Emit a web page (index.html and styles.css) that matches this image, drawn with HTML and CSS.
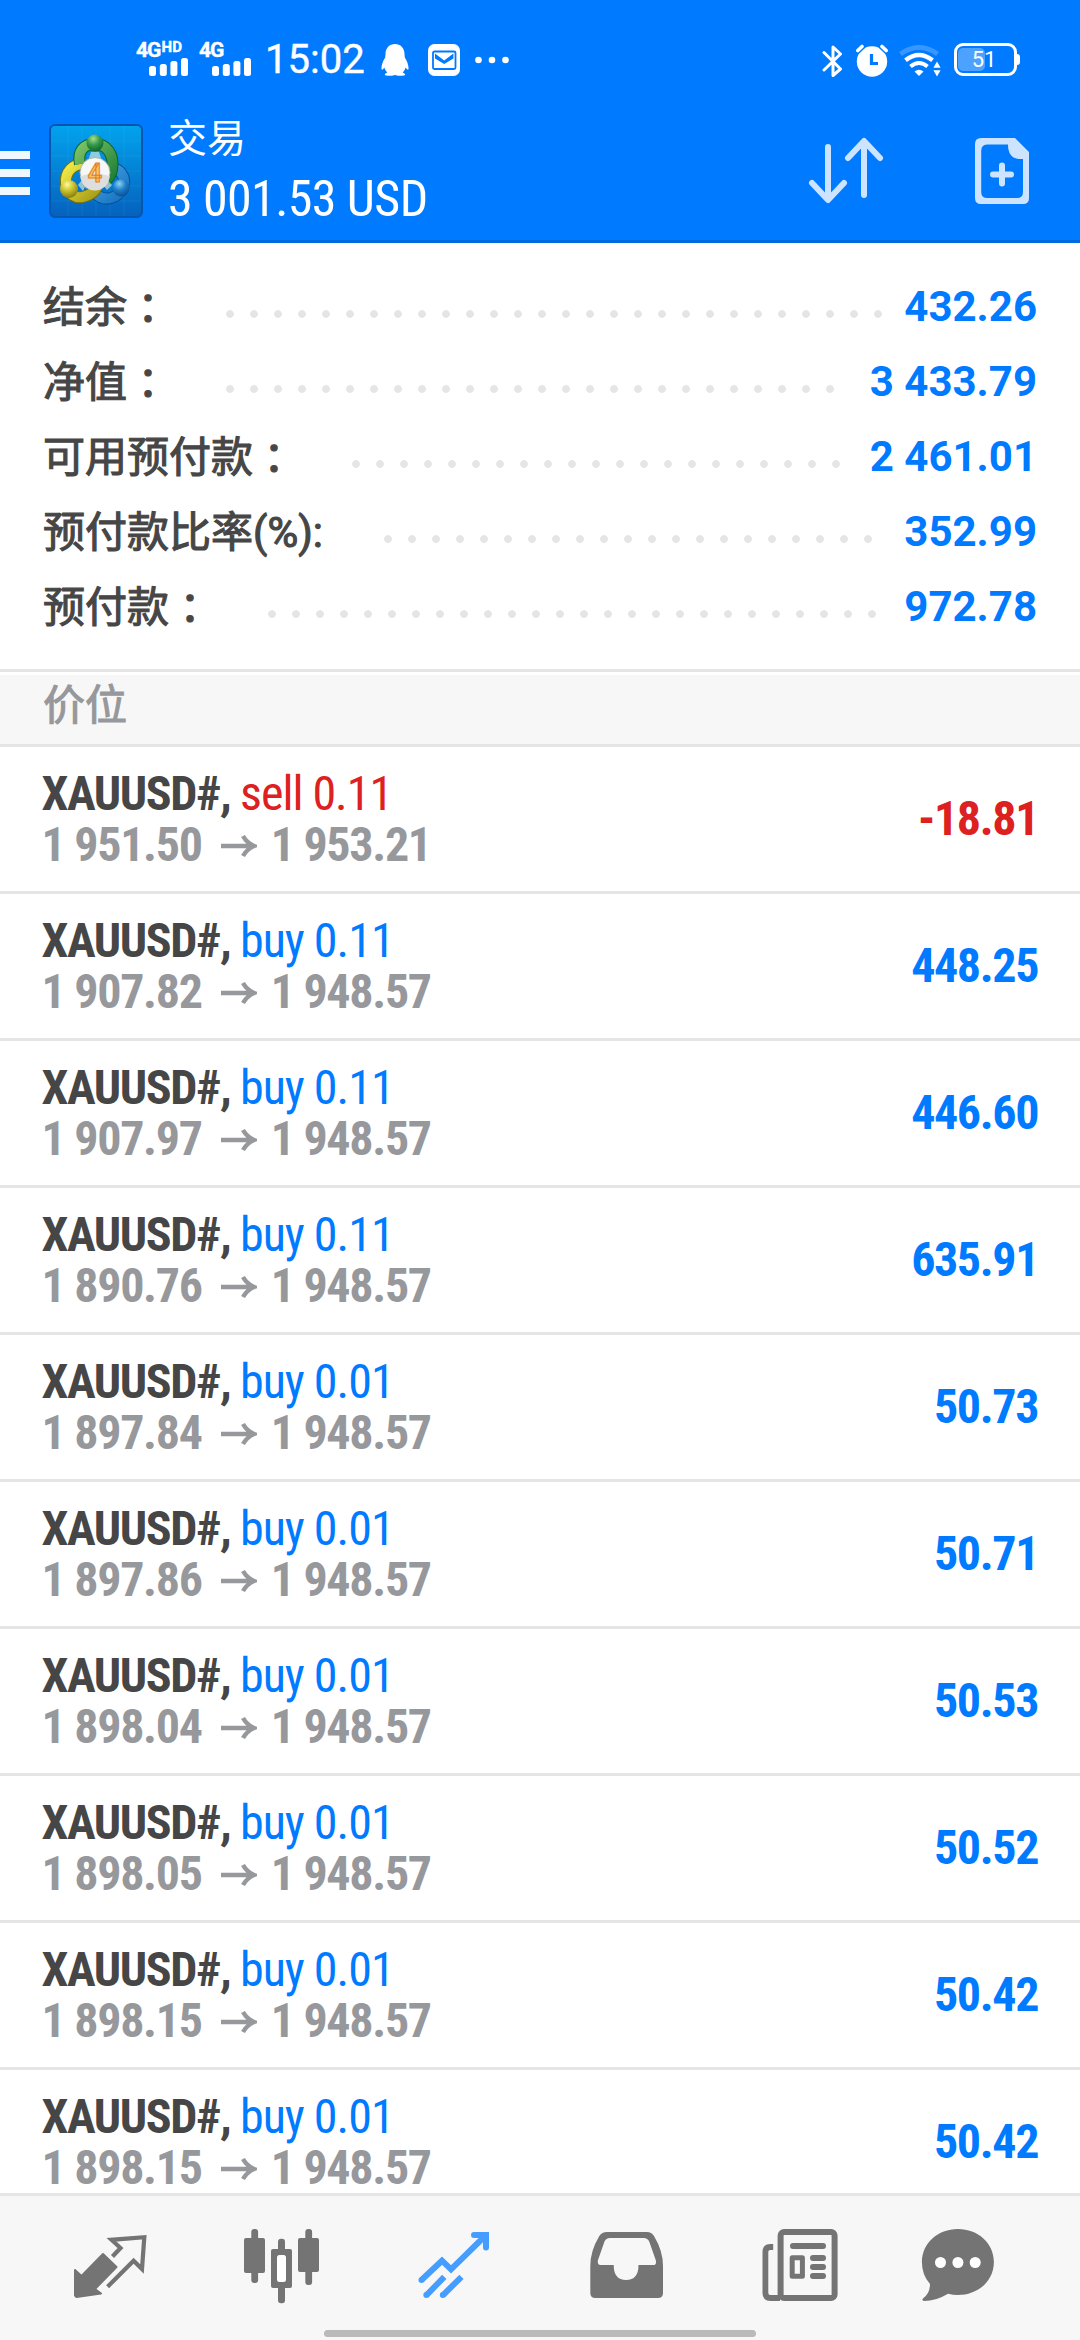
FILE: index.html
```html
<!DOCTYPE html>
<html lang="zh-CN">
<head>
<meta charset="utf-8">
<title>交易</title>
<link rel="stylesheet" href="styles.css">
</head>
<body>
<div class="app">
  <header class="top">
    <div class="status">
      <div class="sim sim-hd">
        <span class="net">4G<sup>HD</sup></span>
        <svg class="bars" width="40" height="18" viewBox="0 0 40 18"><g fill="#fff"><rect y="8" width="7" height="10" rx="2.5"/><rect x="10.8" y="6" width="7" height="12" rx="2.5"/><rect x="21.4" y="3" width="7" height="15" rx="2.5"/><rect x="32" width="7" height="18" rx="2.5"/></g></svg>
      </div>
      <div class="sim">
        <span class="net">4G</span>
        <svg class="bars" width="40" height="18" viewBox="0 0 40 18"><g fill="#fff"><rect y="8" width="7" height="10" rx="2.5"/><rect x="10.8" y="6" width="7" height="12" rx="2.5"/><rect x="21.4" y="3" width="7" height="15" rx="2.5"/><rect x="32" width="7" height="18" rx="2.5"/></g></svg>
      </div>
      <span class="clock">15:02</span>
      <svg class="penguin" width="28" height="32" viewBox="0 0 28 32"><path fill="#fff" d="M14 0C8.500 0 4.500 4 4.500 10l-.3 3.500C2 17 .3 21 .5 25c.2 1.500 1.600.5 2.900-1.500.5 2 1.600 3.700 3 4.900-1.600.7-2.600 1.500-2.600 2.400 0 1.200 9 1.500 10.200 0 1.200 1.500 10.200 1.200 10.200 0 0-.9-1-1.700-2.600-2.400 1.400-1.200 2.500-2.900 3-4.900 1.300 2 2.700 3 2.900 1.500.2-4-1.500-8-3.700-11.500L23.500 10C23.500 4 19.500 0 14 0z"/></svg>
      <svg class="mail" width="32" height="32" viewBox="0 0 32 32"><rect width="32" height="32" rx="6.500" fill="#fff"/><rect x="5" y="7.500" width="22.500" height="17.500" rx="1.500" fill="none" stroke="#007aff" stroke-width="1.800"/><path d="M7 9.500l9.200 7 9.200-7v5l-9.200 5.500-9.200-5.500z" fill="#007aff"/></svg>
      <svg class="more" width="34" height="8" viewBox="0 0 34 8"><g fill="#fff"><circle cx="3.500" cy="4" r="3.300"/><circle cx="17" cy="4" r="3.300"/><circle cx="30.500" cy="4" r="3.300"/></g></svg>
      <svg class="bt" width="22" height="34" viewBox="0 0 22 34"><path fill="none" stroke="#fff" stroke-width="3" stroke-linejoin="round" stroke-linecap="round" d="M2 8.500 18.500 25 11 31.500V3l7.500 7L2 26"/></svg>
      <svg class="alarm" width="32" height="33" viewBox="0 0 32 33"><circle cx="16" cy="17.500" r="15.200" fill="#fff"/><path d="M1.800 6.500 6 2.500M30.200 6.500 26 2.500" stroke="#007aff" stroke-width="6.500" stroke-linecap="round"/><path d="M1.800 6.500 6 2.500M30.200 6.500 26 2.500" stroke="#fff" stroke-width="3.600" stroke-linecap="round"/><path d="M15.500 10v9.500h6.500" fill="none" stroke="#007aff" stroke-width="3.200"/></svg>
      <svg class="wifi" width="42" height="32" viewBox="0 0 42 32"><g fill="none" stroke="#fff"><path d="M1.500 9Q20 -4 38.500 9" stroke-width="5" opacity=".22"/><path d="M6.500 15.200Q20 4.800 33.500 15.200" stroke-width="4.400"/><path d="M11.500 21.500Q20 14.600 28.500 21.500" stroke-width="4"/></g><path d="M15.500 26.500Q20 23 24.500 26.500L20 31z" fill="#fff"/><path d="M38 16.500l3.600 6.200h-7.200zM38 31.500l3.600-6.200h-7.200z" fill="#fff"/></svg>
      <div class="battery"><span class="charge"></span><span class="pct">51</span></div>
    </div>
    <div class="bar">
      <svg class="menu" width="30" height="44" viewBox="0 0 30 44"><path d="M0 0h30v8H0zM0 18h30v8H0zM0 36h30v8H0z" fill="#eff8ff"/></svg>
      <svg class="logo" width="94" height="94" viewBox="0 0 94 94">
        <defs>
          <linearGradient id="sky" x1="0" y1="0" x2="0" y2="1"><stop offset="0" stop-color="#02a3ee"/><stop offset="1" stop-color="#0561bd"/></linearGradient>
          <linearGradient id="green" x1="0" y1="0" x2="1" y2="1"><stop offset="0" stop-color="#7cc268"/><stop offset="1" stop-color="#1d7f35"/></linearGradient>
          <linearGradient id="yellow" x1="0" y1="0" x2="1" y2="1"><stop offset="0" stop-color="#f4ec48"/><stop offset="1" stop-color="#a79b16"/></linearGradient>
          <linearGradient id="blue" x1="0" y1="0" x2="1" y2="1"><stop offset="0" stop-color="#4fa9e4"/><stop offset="1" stop-color="#1673c2"/></linearGradient>
          <radialGradient id="gball" cx=".4" cy=".25" r=".75"><stop offset="0" stop-color="#a7df8e"/><stop offset=".5" stop-color="#35994a"/><stop offset="1" stop-color="#10682b"/></radialGradient>
          <radialGradient id="yball" cx=".4" cy=".25" r=".75"><stop offset="0" stop-color="#fffb9a"/><stop offset=".5" stop-color="#c9bf2a"/><stop offset="1" stop-color="#857e13"/></radialGradient>
          <radialGradient id="bball" cx=".4" cy=".25" r=".75"><stop offset="0" stop-color="#8fd0f5"/><stop offset=".5" stop-color="#1f80c8"/><stop offset="1" stop-color="#0b5196"/></radialGradient>
        </defs>
        <rect x="1" y="1" width="92" height="92" rx="5" fill="url(#sky)" stroke="#0756ae" stroke-width="2"/>
        <path d="M19 2v90M33 2v90M47 2v90M61 2v90M75 2v90M2 17h90M2 32h90M2 47h90M2 62h90M2 77h90" stroke="#fff" stroke-opacity=".06"/>
        <path fill="none" stroke="#07519a" stroke-width="12" d="M62 43c12 3 16 13 11 22s-16 13-25 6c-5-4-8-9-9-14"/>
        <path fill="none" stroke="url(#blue)" stroke-width="10" d="M62 43c12 3 16 13 11 22s-16 13-25 6c-5-4-8-9-9-14"/>
        <path fill="none" stroke="#756e0c" stroke-width="12" d="M36 40c-13-1-20 9-19 19 1 11 10 17 20 13 6-2 9-5 11-9"/>
        <path fill="none" stroke="url(#yellow)" stroke-width="10" d="M36 40c-13-1-20 9-19 19 1 11 10 17 20 13 6-2 9-5 11-9"/>
        <path fill="none" stroke="#0b6428" stroke-width="12" d="M31 40C28 27 35 20 46 20s20 10 17 26c-1 5-3 8-6 10"/>
        <path fill="none" stroke="url(#green)" stroke-width="10" d="M31 40C28 27 35 20 46 20s20 10 17 26c-1 5-3 8-6 10"/>
        <path d="M42 28h8l2 6H40zM29 61l3-4 5 4-3 6zM63 61l-4-4-5 4 4 5z" fill="#e9f5dd" opacity=".6"/>
        <circle cx="46" cy="19" r="8.500" fill="url(#gball)"/>
        <circle cx="20" cy="65" r="9" fill="url(#yball)"/>
        <circle cx="72" cy="64" r="8.500" fill="url(#bball)"/>
        <circle cx="46" cy="48.500" r="15" fill="#f7f7f7" stroke="#a5b4aa"/>
        <path d="M31.500 52Q46 47 60.500 52a14.500 14.500 0 0 1-29 0z" fill="#dedede"/>
        <text class="logo-num" x="46" y="57.500" text-anchor="middle">4</text>
      </svg>
      <div class="titles">
        <h1>交易</h1>
        <div class="total">3 001.53 USD</div>
      </div>
      <svg class="sort" width="76" height="68" viewBox="0 0 76 68"><path fill="none" stroke="#cce4ff" stroke-width="6" stroke-linecap="round" stroke-linejoin="round" d="M20 10v52M4 46l16 17 16-17M56 58V6M40 21 56 4l16 17"/></svg>
      <svg class="new" width="54" height="66" viewBox="0 0 54 66"><path fill="#cce4ff" fill-rule="evenodd" d="M5 0h35l14 14v46q0 6-6 6H6q-6 0-6-6V6q0-6 6-6zM12 6.500Q6.200 6.500 6.200 13v41q0 6 6 6H42q6 0 6-6V21h-4q-11-1-11-14.500z"/><path d="M27 27.500v18M18 36.500h18" stroke="#cce4ff" stroke-width="6" stroke-linecap="round"/></svg>
    </div>
  </header>

  <section class="summary">
    <div class="line"><span class="label">结余<i lang="ja">：</i></span><span class="dots" style="width:656px"></span><b>432.26</b></div>
    <div class="line"><span class="label">净值<i lang="ja">：</i></span><span class="dots" style="width:608px"></span><b>3 433.79</b></div>
    <div class="line"><span class="label">可用预付款<i lang="ja">：</i></span><span class="dots" style="width:488px"></span><b>2 461.01</b></div>
    <div class="line ratio"><span class="label">预付款比率(%):</span><span class="dots" style="width:488px"></span><b>352.99</b></div>
    <div class="line"><span class="label">预付款<i lang="ja">：</i></span><span class="dots" style="width:608px"></span><b>972.78</b></div>
  </section>

  <h2 class="section">价位</h2>

  <main class="positions">
    <div class="pos sell"><div><p class="name">XAUUSD#, <span>sell 0.11</span></p><p class="price">1 951.50<svg class="arrow" width="36" height="24" viewBox="0 0 36 24"><path d="M0 12h32M22 2q4 7 11 10-7 3-11 10" /></svg>1 953.21</p></div><b>-18.81</b></div>
    <div class="pos"><div><p class="name">XAUUSD#, <span>buy 0.11</span></p><p class="price">1 907.82<svg class="arrow" width="36" height="24" viewBox="0 0 36 24"><path d="M0 12h32M22 2q4 7 11 10-7 3-11 10" /></svg>1 948.57</p></div><b>448.25</b></div>
    <div class="pos"><div><p class="name">XAUUSD#, <span>buy 0.11</span></p><p class="price">1 907.97<svg class="arrow" width="36" height="24" viewBox="0 0 36 24"><path d="M0 12h32M22 2q4 7 11 10-7 3-11 10" /></svg>1 948.57</p></div><b>446.60</b></div>
    <div class="pos"><div><p class="name">XAUUSD#, <span>buy 0.11</span></p><p class="price">1 890.76<svg class="arrow" width="36" height="24" viewBox="0 0 36 24"><path d="M0 12h32M22 2q4 7 11 10-7 3-11 10" /></svg>1 948.57</p></div><b>635.91</b></div>
    <div class="pos"><div><p class="name">XAUUSD#, <span>buy 0.01</span></p><p class="price">1 897.84<svg class="arrow" width="36" height="24" viewBox="0 0 36 24"><path d="M0 12h32M22 2q4 7 11 10-7 3-11 10" /></svg>1 948.57</p></div><b>50.73</b></div>
    <div class="pos"><div><p class="name">XAUUSD#, <span>buy 0.01</span></p><p class="price">1 897.86<svg class="arrow" width="36" height="24" viewBox="0 0 36 24"><path d="M0 12h32M22 2q4 7 11 10-7 3-11 10" /></svg>1 948.57</p></div><b>50.71</b></div>
    <div class="pos"><div><p class="name">XAUUSD#, <span>buy 0.01</span></p><p class="price">1 898.04<svg class="arrow" width="36" height="24" viewBox="0 0 36 24"><path d="M0 12h32M22 2q4 7 11 10-7 3-11 10" /></svg>1 948.57</p></div><b>50.53</b></div>
    <div class="pos"><div><p class="name">XAUUSD#, <span>buy 0.01</span></p><p class="price">1 898.05<svg class="arrow" width="36" height="24" viewBox="0 0 36 24"><path d="M0 12h32M22 2q4 7 11 10-7 3-11 10" /></svg>1 948.57</p></div><b>50.52</b></div>
    <div class="pos"><div><p class="name">XAUUSD#, <span>buy 0.01</span></p><p class="price">1 898.15<svg class="arrow" width="36" height="24" viewBox="0 0 36 24"><path d="M0 12h32M22 2q4 7 11 10-7 3-11 10" /></svg>1 948.57</p></div><b>50.42</b></div>
    <div class="pos"><div><p class="name">XAUUSD#, <span>buy 0.01</span></p><p class="price">1 898.15<svg class="arrow" width="36" height="24" viewBox="0 0 36 24"><path d="M0 12h32M22 2q4 7 11 10-7 3-11 10" /></svg>1 948.57</p></div><b>50.42</b></div>
  </main>

  <footer class="tabs">
    <nav>
      <svg viewBox="0 0 173 96"><path fill="#747474" stroke="#747474" stroke-width="2" stroke-linejoin="round" d="M81 34l13.500 13L73 69l6 4.500L54.500 77l-1.500-1.500V50l6.500 6z"/><path fill="none" stroke="#747474" stroke-width="4.200" d="M90.500 36.500 98.500 28l-9-8.200 32.800-2.600L120 49l-8.400-8.300-26 26"/></svg>
      <svg viewBox="0 0 173 96"><g fill="#747474"><rect x="49" y="18" width="21" height="35" rx="2"/><rect x="56.300" y="9" width="6.800" height="54" rx="3"/><rect x="83" y="18.700" width="7" height="64.500" rx="3"/><rect x="76" y="29" width="21" height="39" rx="2"/><rect x="103" y="18" width="21" height="34" rx="2"/><rect x="110.300" y="9" width="6.800" height="56" rx="3"/></g><rect x="82" y="35" width="9" height="27" rx="2.500" fill="#fff"/></svg>
      <svg viewBox="0 0 173 96"><g fill="none" stroke="#459dff" stroke-width="6"><path d="M54 59.500 74 40.700l9 8.600L117 16"/><path d="M106 15h12v12.500" stroke-linecap="round"/><path d="M58.300 75.300l18-18.500M74.800 75.300l18.700-18.500"/></g><g fill="#459dff"><circle cx="53.500" cy="60" r="3"/><circle cx="58.300" cy="75" r="3"/><circle cx="74.800" cy="75" r="3"/></g></svg>
      <svg viewBox="0 0 173 96"><path fill="#747474" fill-rule="evenodd" d="M66 12h40q4.500 0 7 4 9 15 9 30v27q0 5-5 5H54.300q-5 0-5-5V46q0-15 9-30 2.500-4 7.700-4zM69 18q-4 0-5.500 3.500L57 40q-1 5 2.500 5h13.200q0 15 12.400 15t12.400-15H112q4 0 2.700-5l-6.500-18.500Q106.500 18 103 18z"/></svg>
      <svg viewBox="0 0 173 96"><rect x="66.600" y="12" width="54" height="66" rx="3.500" fill="none" stroke="#747474" stroke-width="6"/><path d="M59.200 27h-3q-4.800 0-4.800 5v41q0 5 5 5H66" fill="none" stroke="#747474" stroke-width="5.800"/><path d="M79 26h30M99 38h10M99 47h10M99 56h10" stroke="#747474" stroke-width="6" stroke-linecap="round"/><rect x="78.200" y="37.800" width="10.200" height="18.400" fill="none" stroke="#747474" stroke-width="5" stroke-linejoin="round"/></svg>
      <svg viewBox="0 0 173 96"><path fill="#747474" d="M70.900 9C91 9 106.900 23 106.900 42S91 75 70.900 75q-5 0-9.900-1.300Q49 81 37 81q-3-.5-.5-3Q43 73 43 64q-8.100-9-8.100-22C34.900 23 51 9 70.900 9z"/><g fill="#fff"><circle cx="53.500" cy="42.500" r="5.500"/><circle cx="70.900" cy="42.500" r="5.500"/><circle cx="88.200" cy="42.500" r="5.500"/></g></svg>
    </nav>
    <div class="home"></div>
  </footer>
</div>
</body>
</html>
```
FILE: styles.css
```css
* { box-sizing: border-box; margin: 0; padding: 0; }
body { background: #fff; font-family: Roboto, "Noto Sans CJK SC", sans-serif; }
svg { display: block; flex: none; }
.app { width: 1080px; height: 2340px; display: flex; flex-direction: column; overflow: hidden; background: #fff; }

.top { height: 243px; flex: none; background: #007aff; border-bottom: 3px solid #006bdf; color: #fff; }
.status { height: 120px; padding: 42px 60px 0 136px; display: flex; align-items: flex-start; }
.sim { width: 53px; height: 36px; display: flex; flex-direction: column; align-items: flex-end; justify-content: space-between; }
.sim-hd { margin-right: 10px; }
.net { align-self: flex-start; height: 16px; font-size: 21px; line-height: 16px; font-weight: 700; letter-spacing: -1px; white-space: nowrap; -webkit-text-stroke: .4px #fff; }
.net sup { font-size: 15px; line-height: 8px; vertical-align: 5px; letter-spacing: .3px; margin-left: 1px; }
.bars { margin-bottom: 2px; }
.clock { width: 117px; padding-left: 13px; font-size: 40px; line-height: 40px; letter-spacing: 0; margin-top: -2px; -webkit-text-stroke: .4px #fff; }
.penguin { margin: 2px 0 0 12px; }
.mail { margin: 2px 0 0 19px; }
.more { margin: 14px 0 0 15px; }
.bt { margin: 2px 0 0 313px; }
.alarm { margin: 2px 0 0 12px; }
.wifi { margin: 3px 0 0 11px; }
.battery { position: relative; width: 63px; height: 33px; margin: 1px 0 0 13px; border: 3px solid #fff; border-radius: 9px; display: flex; align-items: center; justify-content: center; }
.battery::after { content: ""; position: absolute; right: -6px; top: 8px; width: 3px; height: 11px; border-radius: 0 3px 3px 0; background: #fff; }
.charge { position: absolute; left: 1px; top: 2px; width: 27px; height: 23px; border-radius: 5px; background: #4da2ff; }
.pct { position: relative; font-size: 22px; line-height: 24px; margin-left: -3px; }
.bar { height: 120px; display: flex; align-items: flex-start; }
.menu { margin-top: 31px; }
.logo { margin: 4px 0 0 19px; }
.logo-num { font: 700 25px Roboto, sans-serif; fill: #fbc25b; stroke: #e57e25; stroke-width: 1; }
.titles { width: 500px; margin-left: 25px; }
.titles h1 { font-size: 39px; line-height: 40px; font-weight: 400; margin-top: -1px; }
.total { font: 400 50px/60px "Roboto Condensed", Roboto, sans-serif; font-stretch: 75%; letter-spacing: -.6px; margin-top: 10px; white-space: nowrap; }
.sort { margin: 17px 0 0 140px; }
.new { margin: 18px 0 0 91px; }

.summary { height: 429px; flex: none; padding: 26px 43px 0; border-bottom: 3px solid #e5e5e5; }
.line { height: 75px; display: flex; align-items: center; font-size: 42px; color: #464646; white-space: nowrap; }
.label { font-weight: 400; margin-bottom: 6px; -webkit-text-stroke: 1.100px #464646; }
.label i { display: inline-block; line-height: 1; padding-top: 3px; margin-bottom: -3px; vertical-align: -2px; font-style: normal; font-family: "Noto Sans CJK JP", sans-serif; }
.dots { height: 8px; margin: 14px 0 0 57px; background: radial-gradient(circle at 4px 4px, #e5e5e5 3.500px, transparent 4.200px) 0 0 / 24px 8px repeat-x; }
.ratio .dots { margin-left: 61px; }
.line b { margin-left: auto; color: #007aff; font-weight: 700; }

.section { height: 72px; flex: none; margin-top: 3px; padding-left: 43px; background: #f7f7f7; border-bottom: 3px solid #e5e5e5; color: #97989c; font-size: 42px; line-height: 62px; font-weight: 400; -webkit-text-stroke: 1.100px #97989c; }

.positions { flex: 1; min-height: 0; overflow: hidden; font-family: "Roboto Condensed", Roboto, sans-serif; font-stretch: 75%; font-size: 48px; letter-spacing: -1.400px; }
.pos { height: 147px; padding: 0 43px 0 41.500px; border-bottom: 3px solid #e5e5e5; display: flex; justify-content: space-between; align-items: center; }
.pos p { line-height: 51px; white-space: nowrap; font-weight: 700; }
.name { color: #464646; }
.name span { font-weight: 400; color: #007aff; letter-spacing: -1px; }
.pos .price { color: #97989c; display: flex; align-items: center; letter-spacing: -1.300px; }
.arrow { margin: 3px 14px 0 19px; fill: none; stroke: #97989c; stroke-width: 4.500; }
.pos b { color: #007aff; font-weight: 700; margin: 0 -1px 2px 0; }
.sell .name span, .sell b { color: #dd2020; }

.tabs { height: 147px; flex: none; background: #f7f7f7; border-top: 3px solid #e5e5e5; }
.tabs nav { display: flex; padding: 24px 0 0 22px; }
.tabs nav svg { width: 173px; height: 96px; }
.home { width: 432px; height: 7px; margin: 14px auto 0; border-radius: 4px; background: #bababa; }
```
